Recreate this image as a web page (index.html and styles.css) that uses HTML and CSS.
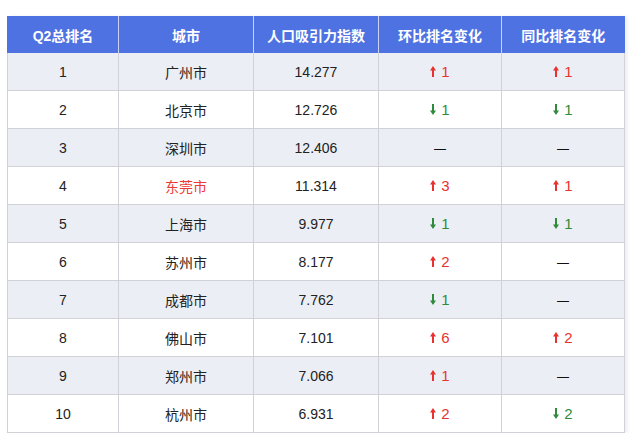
FILE: index.html
```html
<!DOCTYPE html>
<html>
<head>
<meta charset="utf-8">
<link rel="stylesheet" href="styles.css">
</head>
<body>
<div class="wrap">
<table class="rank">
  <colgroup>
    <col class="c1"><col class="c2"><col class="c3"><col class="c4"><col class="c5">
  </colgroup>
  <thead>
    <tr><th>Q2总排名</th><th>城市</th><th>人口吸引力指数</th><th>环比排名变化</th><th>同比排名变化</th></tr>
  </thead>
  <tbody>
    <tr><td>1</td><td>广州市</td><td>14.277</td>
      <td><span class="chg up"><svg class="arr" viewBox="0 0 6 11"><path d="M3 0 L6 4.5 L4 4.5 L4 11 L2 11 L2 4.5 L0 4.5 Z"/></svg>1</span></td>
      <td><span class="chg up"><svg class="arr" viewBox="0 0 6 11"><path d="M3 0 L6 4.5 L4 4.5 L4 11 L2 11 L2 4.5 L0 4.5 Z"/></svg>1</span></td></tr>
    <tr><td>2</td><td>北京市</td><td>12.726</td>
      <td><span class="chg down"><svg class="arr" viewBox="0 0 6 11"><path d="M3 11 L6 6.5 L4 6.5 L4 0 L2 0 L2 6.5 L0 6.5 Z"/></svg>1</span></td>
      <td><span class="chg down"><svg class="arr" viewBox="0 0 6 11"><path d="M3 11 L6 6.5 L4 6.5 L4 0 L2 0 L2 6.5 L0 6.5 Z"/></svg>1</span></td></tr>
    <tr><td>3</td><td>深圳市</td><td>12.406</td><td><span class="flat">—</span></td><td><span class="flat">—</span></td></tr>
    <tr><td>4</td><td class="hl">东莞市</td><td>11.314</td>
      <td><span class="chg up"><svg class="arr" viewBox="0 0 6 11"><path d="M3 0 L6 4.5 L4 4.5 L4 11 L2 11 L2 4.5 L0 4.5 Z"/></svg>3</span></td>
      <td><span class="chg up"><svg class="arr" viewBox="0 0 6 11"><path d="M3 0 L6 4.5 L4 4.5 L4 11 L2 11 L2 4.5 L0 4.5 Z"/></svg>1</span></td></tr>
    <tr><td>5</td><td>上海市</td><td>9.977</td>
      <td><span class="chg down"><svg class="arr" viewBox="0 0 6 11"><path d="M3 11 L6 6.5 L4 6.5 L4 0 L2 0 L2 6.5 L0 6.5 Z"/></svg>1</span></td>
      <td><span class="chg down"><svg class="arr" viewBox="0 0 6 11"><path d="M3 11 L6 6.5 L4 6.5 L4 0 L2 0 L2 6.5 L0 6.5 Z"/></svg>1</span></td></tr>
    <tr><td>6</td><td>苏州市</td><td>8.177</td>
      <td><span class="chg up"><svg class="arr" viewBox="0 0 6 11"><path d="M3 0 L6 4.5 L4 4.5 L4 11 L2 11 L2 4.5 L0 4.5 Z"/></svg>2</span></td>
      <td><span class="flat">—</span></td></tr>
    <tr><td>7</td><td>成都市</td><td>7.762</td>
      <td><span class="chg down"><svg class="arr" viewBox="0 0 6 11"><path d="M3 11 L6 6.5 L4 6.5 L4 0 L2 0 L2 6.5 L0 6.5 Z"/></svg>1</span></td>
      <td><span class="flat">—</span></td></tr>
    <tr><td>8</td><td>佛山市</td><td>7.101</td>
      <td><span class="chg up"><svg class="arr" viewBox="0 0 6 11"><path d="M3 0 L6 4.5 L4 4.5 L4 11 L2 11 L2 4.5 L0 4.5 Z"/></svg>6</span></td>
      <td><span class="chg up"><svg class="arr" viewBox="0 0 6 11"><path d="M3 0 L6 4.5 L4 4.5 L4 11 L2 11 L2 4.5 L0 4.5 Z"/></svg>2</span></td></tr>
    <tr><td>9</td><td>郑州市</td><td>7.066</td>
      <td><span class="chg up"><svg class="arr" viewBox="0 0 6 11"><path d="M3 0 L6 4.5 L4 4.5 L4 11 L2 11 L2 4.5 L0 4.5 Z"/></svg>1</span></td>
      <td><span class="flat">—</span></td></tr>
    <tr><td>10</td><td>杭州市</td><td>6.931</td>
      <td><span class="chg up"><svg class="arr" viewBox="0 0 6 11"><path d="M3 0 L6 4.5 L4 4.5 L4 11 L2 11 L2 4.5 L0 4.5 Z"/></svg>2</span></td>
      <td><span class="chg down"><svg class="arr" viewBox="0 0 6 11"><path d="M3 11 L6 6.5 L4 6.5 L4 0 L2 0 L2 6.5 L0 6.5 Z"/></svg>2</span></td></tr>
  </tbody>
</table>
</div>
</body>
</html>
```
FILE: styles.css
```css
html, body {
  margin: 0;
  padding: 0;
  background: #ffffff;
}
body {
  font-family: "Liberation Sans", "Noto Sans CJK SC", sans-serif;
  color: #222;
}
.wrap {
  padding: 16px 0 0 7px;
}
.rank {
  border-collapse: collapse;
  table-layout: fixed;
  width: 617px;
  box-shadow: 3px 0 3px rgba(0,0,0,0.06);
}
.c1 { width: 111px; }
.c2 { width: 135px; }
.c3 { width: 125px; }
.c4 { width: 123px; }
.c5 { width: 123px; }
.rank th {
  background: #4e72e2;
  color: #ffffff;
  font-weight: bold;
  font-size: 14px;
  height: 37px;
  padding: 0;
  border-left: 1px solid #c9d4f6;
  text-align: center;
}
.rank th:first-child { border-left: 1px solid #4e72e2; }
.rank td {
  height: 37px;
  padding: 0;
  text-align: center;
  font-size: 14px;
  border: 1px solid #d0d2d8;
  border-top: none;
}
.rank tbody tr:nth-child(odd) td { background: #eceef5; }
.rank tbody tr:nth-child(even) td { background: #ffffff; }
.hl { color: #ec3a34; }
.chg {
  display: inline-flex;
  align-items: center;
  gap: 5px;
  font-size: 15px;
}
.arr {
  width: 6px;
  height: 11px;
  fill: currentColor;
}
.up { color: #e8322f; }
.down { color: #2f8a3c; }
.flat {
  color: #111;
  font-size: 12px;
}
```
